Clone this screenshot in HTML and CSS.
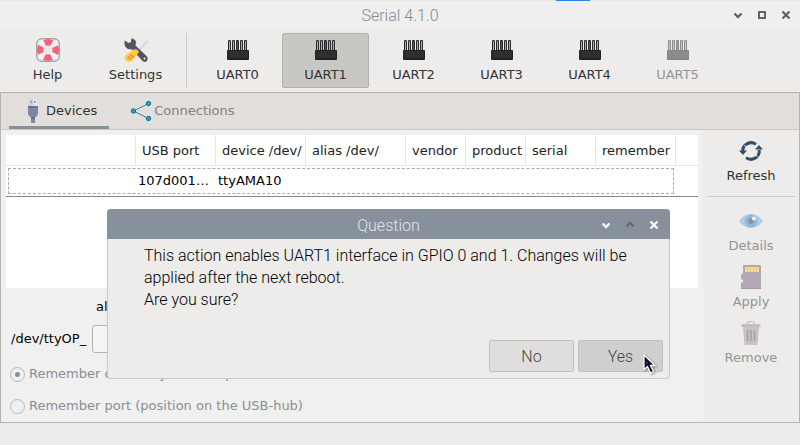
FILE: index.html
```html
<!DOCTYPE html>
<html lang="en">
<head>
<meta charset="utf-8">
<title>Serial 4.1.0</title>
<link rel="stylesheet" href="styles.css">
</head>
<body>
<svg class="defs" aria-hidden="true">
  <symbol id="header-pins" viewBox="0 0 24 24">
    <path d="M1 12h22v9H1z" fill="#bdbdbc"/>
    <g fill="#a9a9a8" stroke="#2b2c2d" stroke-width="1"><path d="M2.500 13V2.500h2V13M6.500 13V2.500h2V13M14.500 13V2.500h2V13M18.500 13V2.500h2V13"/><path d="M10.500 13V2.500h2V13" fill="#555"/></g>
    <rect x="1" y="12" width="22" height="10" rx="1" fill="#202122"/>
    <rect x="2" y="13" width="20" height="7" fill="#2d2e30"/>
  </symbol>
  <symbol id="chevron" viewBox="0 0 24 24"><path d="M8.500 10.500l3.500 3.500 3.500-3.500" fill="none" stroke="currentColor" stroke-width="2.400"/></symbol>
  <symbol id="cross" viewBox="0 0 24 24"><path d="M8.500 8.500l7 7M15.500 8.500l-7 7" fill="none" stroke="currentColor" stroke-width="2.200"/></symbol>
</svg>

<div class="window">
  <header class="titlebar">
    <span class="progress"></span>
    <h1 class="title">Serial 4.1.0</h1>
    <div class="controls">
      <button aria-label="Minimize"><svg><use href="#chevron"/></svg></button>
      <button aria-label="Maximize"><svg viewBox="0 0 24 24"><rect x="9" y="9" width="6" height="6" fill="none" stroke="currentColor" stroke-width="2"/></svg></button>
      <button aria-label="Close"><svg><use href="#cross"/></svg></button>
    </div>
  </header>

  <nav class="toolbar">
    <button class="tool">
      <svg viewBox="0 0 24 24"><path d="M6 .8h12Q23.200.800 23.200 6v12q0 5.200-5.200 5.200H6Q.8 23.200.800 18V6Q.8.800 6 .800" fill="#edecea" stroke="#7c8796"/><circle cx="12" cy="12" r="7.800" fill="none" stroke="#f5f4f5" stroke-width="6.500"/><circle cx="12" cy="12" r="7.800" fill="none" stroke="#f2637e" stroke-width="6.500" stroke-dasharray="7.400 4.852" stroke-dashoffset="3.700"/><circle cx="12" cy="12" r="4.300" fill="#e9e8e7"/></svg>
      <span>Help</span>
    </button>
    <button class="tool">
      <svg viewBox="0 0 24 24"><path d="M23.500 3l-9 10" stroke="#c5d3df" stroke-width="1.500"/><path d="M1 2.500L4.500 5 7 4 7.300.500Q11 .500 12 4L11.500 7.500 23 18.500Q25 22 21.500 24L19 23.500 8 11.500 4 11Q0 9 .500 4z" fill="#55555f"/><circle cx="20.500" cy="20.500" r="1" fill="#eee"/><path d="M12 11l3 2.500-1.500 2.500-5 6.500Q5 25 2 22.500T2 17l7-5z" fill="#ffc83d"/><path d="M4 18.500l3 3M6.500 16.500l3 3" stroke="#f28a32" stroke-width="1.500"/></svg>
      <span>Settings</span>
    </button>
    <span class="divider"></span>
    <button class="tool"><svg><use href="#header-pins"/></svg><span>UART0</span></button>
    <button class="tool active"><svg><use href="#header-pins"/></svg><span>UART1</span></button>
    <button class="tool"><svg><use href="#header-pins"/></svg><span>UART2</span></button>
    <button class="tool"><svg><use href="#header-pins"/></svg><span>UART3</span></button>
    <button class="tool"><svg><use href="#header-pins"/></svg><span>UART4</span></button>
    <button class="tool" disabled><svg><use href="#header-pins"/></svg><span>UART5</span></button>
  </nav>

  <main class="notebook">
    <div class="tabs" role="tablist">
      <button class="tab selected" role="tab" aria-selected="true">
        <svg viewBox="0 0 24 24"><path d="M8 0h8v7H8z" fill="#c7d1e6"/><path d="M12 0h4v7h-4z" fill="#e0e6f1"/><path d="M9.500 2h1.500v2H9.500zM13 2h1.500v2H13z" fill="#8e9bb8"/><path d="M7 7h10v7q0 2-2 4h-1v6h-4v-6H9q-2-2-2-4z" fill="#7c88a1"/><path d="M7 7h10v2H7zM10 18h4v2h-4z" fill="#68738b"/></svg>
        <span>Devices</span>
      </button>
      <button class="tab" role="tab" aria-selected="false">
        <svg viewBox="0 0 24 24"><g fill="#cfe6f1"><circle cx="4.500" cy="12" r="4.500"/><circle cx="19.500" cy="4.500" r="4.500"/><circle cx="19.500" cy="19.500" r="4.500"/></g><path d="M19.500 4.500L4.500 12l15 7.500" fill="none" stroke="#477f93" stroke-width="1"/><g fill="#4594ae" stroke="#296780"><circle cx="4.500" cy="12" r="2.200"/><circle cx="19.500" cy="4.500" r="2.200"/><circle cx="19.500" cy="19.500" r="2.200"/></g></svg>
        <span>Connections</span>
      </button>
    </div>

    <div class="page">
      <section class="content">
        <div class="list">
          <table>
            <colgroup><col class="w130"><col class="w80"><col class="w90"><col class="w100"><col class="w60"><col class="w60"><col class="w70"><col class="w80"><col></colgroup>
            <thead><tr><th></th><th>USB port</th><th>device /dev/</th><th>alias /dev/</th><th>vendor</th><th>product</th><th>serial</th><th>remember</th><th></th></tr></thead>
            <tbody><tr><td></td><td>107d001…</td><td>ttyAMA10</td><td></td><td></td><td></td><td></td><td></td><td></td></tr></tbody>
          </table>
        </div>
        <form class="form">
          <label class="alias" for="alias">alias</label>
          <div class="field"><span>/dev/ttyOP_</span><input id="alias" type="text"></div>
          <label class="radio"><input type="radio" name="remember" checked disabled>Remember device by vendor, product</label>
          <label class="radio"><input type="radio" name="remember" disabled>Remember port (position on the USB-hub)</label>
        </form>
      </section>

      <aside class="side">
        <button class="tool">
          <svg viewBox="0 0 24 24"><g fill="none" stroke="#315064" stroke-width="3"><path d="M3.800 13A8.300 8.300 0 0 1 17 5.400"/><path d="M20.200 11A8.300 8.300 0 0 1 7 18.600"/></g><path d="M0 11.500h8L4 16zM16 10.500h8L20 6z" fill="#315064"/><path d="M5.300 6l2 2M18.700 18l-2-2" stroke="#edecea" stroke-width="1"/></svg>
          <span>Refresh</span>
        </button>
        <hr>
        <button class="tool" disabled>
          <svg viewBox="0 0 24 24"><path d="M0 12Q5 5 12 5t12 7q-5 7-12 7T0 12" fill="#71afe3"/><circle cx="12" cy="12" r="6.500" fill="#2e8ad0"/><circle cx="12" cy="12" r="2.800" fill="#263943"/><circle cx="15" cy="9.500" r="2" fill="#fff"/></svg>
          <span>Details</span>
        </button>
        <button class="tool" disabled>
          <svg viewBox="0 0 24 24"><path d="M4 0h17l1 1v23H3l-1-1v-5l2-1v-2l-2-1v-4l2-2z" fill="#77677a"/><path d="M2 23h20v1H2z" fill="#554b58"/><path d="M6 2h14v5H6z" fill="#ffca45"/><path d="M8.500 2v5M11.500 2v5M14.500 2v5M17.500 2v5" stroke="#d99c22" stroke-width=".8"/></svg>
          <span>Apply</span>
        </button>
        <button class="tool" disabled>
          <svg viewBox="0 0 24 24"><path d="M8.500 4V2q0-1.300 1.500-1.300h4q1.500 0 1.500 1.300v2" fill="none" stroke="#a9a0a2" stroke-width="1.300"/><path d="M3 3h18l1 3H2z" fill="#9b9092"/><path d="M4 6h16l-1.500 18h-13z" fill="#a59a9c"/><path d="M8.500 9v11M12 9v11M15.500 9v11" stroke="#65595b" stroke-width="1.600"/></svg>
          <span>Remove</span>
        </button>
      </aside>
    </div>
  </main>
</div>

<section class="dialog" role="dialog" aria-labelledby="dialog-title">
  <header class="dialog-bar">
    <h2 class="title" id="dialog-title">Question</h2>
    <div class="controls">
      <button aria-label="Minimize"><svg><use href="#chevron"/></svg></button>
      <button class="flip" aria-label="Maximize" disabled><svg><use href="#chevron"/></svg></button>
      <button aria-label="Close"><svg><use href="#cross"/></svg></button>
    </div>
  </header>
  <p class="message">This action enables UART1 interface in GPIO 0 and 1. Changes will be applied after the next reboot.<br>Are you sure?</p>
  <div class="actions"><button>No</button><button class="hover">Yes</button></div>
  <svg class="pointer" viewBox="0 0 14 20"><path d="M1 1v14.500l3.500-3 3 6.500 3-1.500-3-6h4.500z" fill="#080817" stroke="#fff" stroke-width="1.300"/><path d="M3 6v5l2-2z" fill="#30306b"/></svg>
</section>
</body>
</html>
```
FILE: styles.css
```css
* { box-sizing: border-box; }

body {
  margin: 0;
  background: #edecea;
  color: #2e3436;
  font: 13px/16px "DejaVu Sans", sans-serif;
}

button {
  margin: 0;
  padding: 0;
  border: 0;
  background: none;
  color: inherit;
  font: inherit;
}

.defs { position: absolute; width: 0; height: 0; }

.window {
  display: flex;
  flex-direction: column;
  min-height: 100vh;
  padding-bottom: 22px;
}

.titlebar, .dialog-bar {
  display: grid;
  grid-template-columns: 1fr auto 1fr;
  align-items: center;
  height: 29px;
  padding: 0 2px;
  background: #efefef;
  border-top: 1px solid #e8e8e7;
  color: #868a90;
}

.progress {
  position: absolute;
  top: 0;
  left: 556px;
  width: 34px;
  height: 1px;
  background: #2484e8;
}

.title {
  grid-column: 2;
  margin: 0;
  padding-top: 2px;
  font: 300 16px/20px Roboto, sans-serif;
}

.controls {
  grid-column: 3;
  display: flex;
  justify-content: flex-end;
  color: #62625f;
}

.controls button, .controls svg { display: block; width: 24px; height: 24px; }

.toolbar {
  display: flex;
  gap: 1px;
  padding: 4px;
}

.tool {
  display: flex;
  flex-direction: column;
  align-items: center;
  gap: 5px;
  width: 87px;
  height: 55px;
  padding: 4px 0;
  border: 1px solid transparent;
  border-radius: 2px;
}

.tool svg { width: 24px; height: 24px; }
.tool.active { background: #c8c7c3; border-color: #b3b2ae; }
.tool:disabled { color: #929595; }
.tool:disabled svg { opacity: .5; }
.divider { width: 1px; margin: 0 6px; background: #c8c7c4; }

.notebook {
  flex: 1;
  display: flex;
  flex-direction: column;
  border: 1px solid #b4b4b0;
}

.tabs {
  display: flex;
  gap: 8px;
  height: 37px;
  padding-left: 8px;
  background: #e1dedb;
  border-bottom: 1px solid #cbc6c1;
}

.tab {
  display: flex;
  align-items: center;
  gap: 1px;
  padding: 2px 12px 0;
  border-bottom: 3px solid transparent;
  color: #818281;
}

.tab svg { width: 24px; height: 24px; }
.tab.selected { color: #2e3436; border-color: #87919b; }

.page { flex: 1; display: flex; }
.content { flex: 1; padding: 5px 5px 0; background: #f0f0f1; }

.list { height: 153px; background: #fff; color: #000; }

table { width: 100%; table-layout: fixed; border-collapse: separate; border-spacing: 0; }
.w130 { width: 130px; }
.w100 { width: 100px; }
.w90 { width: 90px; }
.w80 { width: 80px; }
.w70 { width: 70px; }
.w60 { width: 60px; }

th {
  height: 31px;
  padding: 2px 0 0 6px;
  border-right: 1px solid #e6e6e6;
  border-bottom: 1px solid #e6e6e6;
  color: #222;
  font-weight: 400;
  text-align: left;
  white-space: nowrap;
}
th:last-child { border-right: 0; }

td {
  height: 31px;
  padding: 0 2px;
  border-bottom: 1px solid #8a8a8a;
  white-space: nowrap;
}

tbody tr { position: relative; }
td:first-child::after {
  content: "";
  position: absolute;
  inset: 2px 24px 3px 2px;
  border: 1px dashed #aaa;
}

.form { padding: 6px 0 0 5px; color: #000; }
.alias { display: block; padding: 5px 0 10px 85px; }
.field { display: flex; align-items: center; gap: 6px; margin-bottom: 5px; }
.field input {
  width: 240px;
  height: 28px;
  border: 1px solid #b4b4b0;
  border-radius: 3px;
  background: #f4f4f4;
  font: inherit;
}

.radio { display: flex; align-items: center; gap: 4px; height: 32px; color: #8b8e8f; }
.radio input {
  appearance: none;
  width: 15px;
  height: 15px;
  margin: 0 0 0 -1px;
  border: 1px solid #b8b8b6;
  border-radius: 50%;
}
.radio input:checked { background: radial-gradient(circle, #8b918f 2px, transparent 3px); }

.side {
  display: flex;
  flex-direction: column;
  align-items: center;
  width: 96px;
  padding-top: 5px;
  background: #edecea;
}
.side .tool { height: 56px; padding: 3px 0; }
.side hr { width: 88px; height: 1px; margin: 5px 0 8px; border: 0; background: #cbcac7; }

.dialog {
  position: absolute;
  top: 209px;
  left: 107px;
  width: 563px;
  border: 1px solid #c8c8c6;
  border-top: 0;
  border-radius: 4px;
  background: #edecea;
  color: #000;
  font: 300 16px/22px Roboto, sans-serif;
}

.dialog-bar {
  height: 30px;
  margin: 0 -1px;
  padding: 2px 4px 0;
  border: 0;
  border-radius: 4px 4px 0 0;
  background: #87919b;
  color: #e2e5e7;
}
.dialog-bar .controls { color: #fff; }
.dialog-bar .flip { color: #666a6c; transform: rotate(180deg); }

.message { margin: 0; padding: 6px 30px 0 36px; }

.actions {
  display: flex;
  justify-content: flex-end;
  gap: 4px;
  padding: 29px 6px 6px;
}
.actions button {
  width: 85px;
  height: 32px;
  padding-top: 2px;
  border: 1px solid #c1c0be;
  border-radius: 2px;
  background: #dfdedc;
  color: #41474a;
}
.actions .hover { background: #d0cfcd; }

.pointer {
  position: absolute;
  right: 12px;
  bottom: 4px;
  width: 14px;
  height: 20px;
  filter: drop-shadow(1px 1px 1px #0006);
}
```
